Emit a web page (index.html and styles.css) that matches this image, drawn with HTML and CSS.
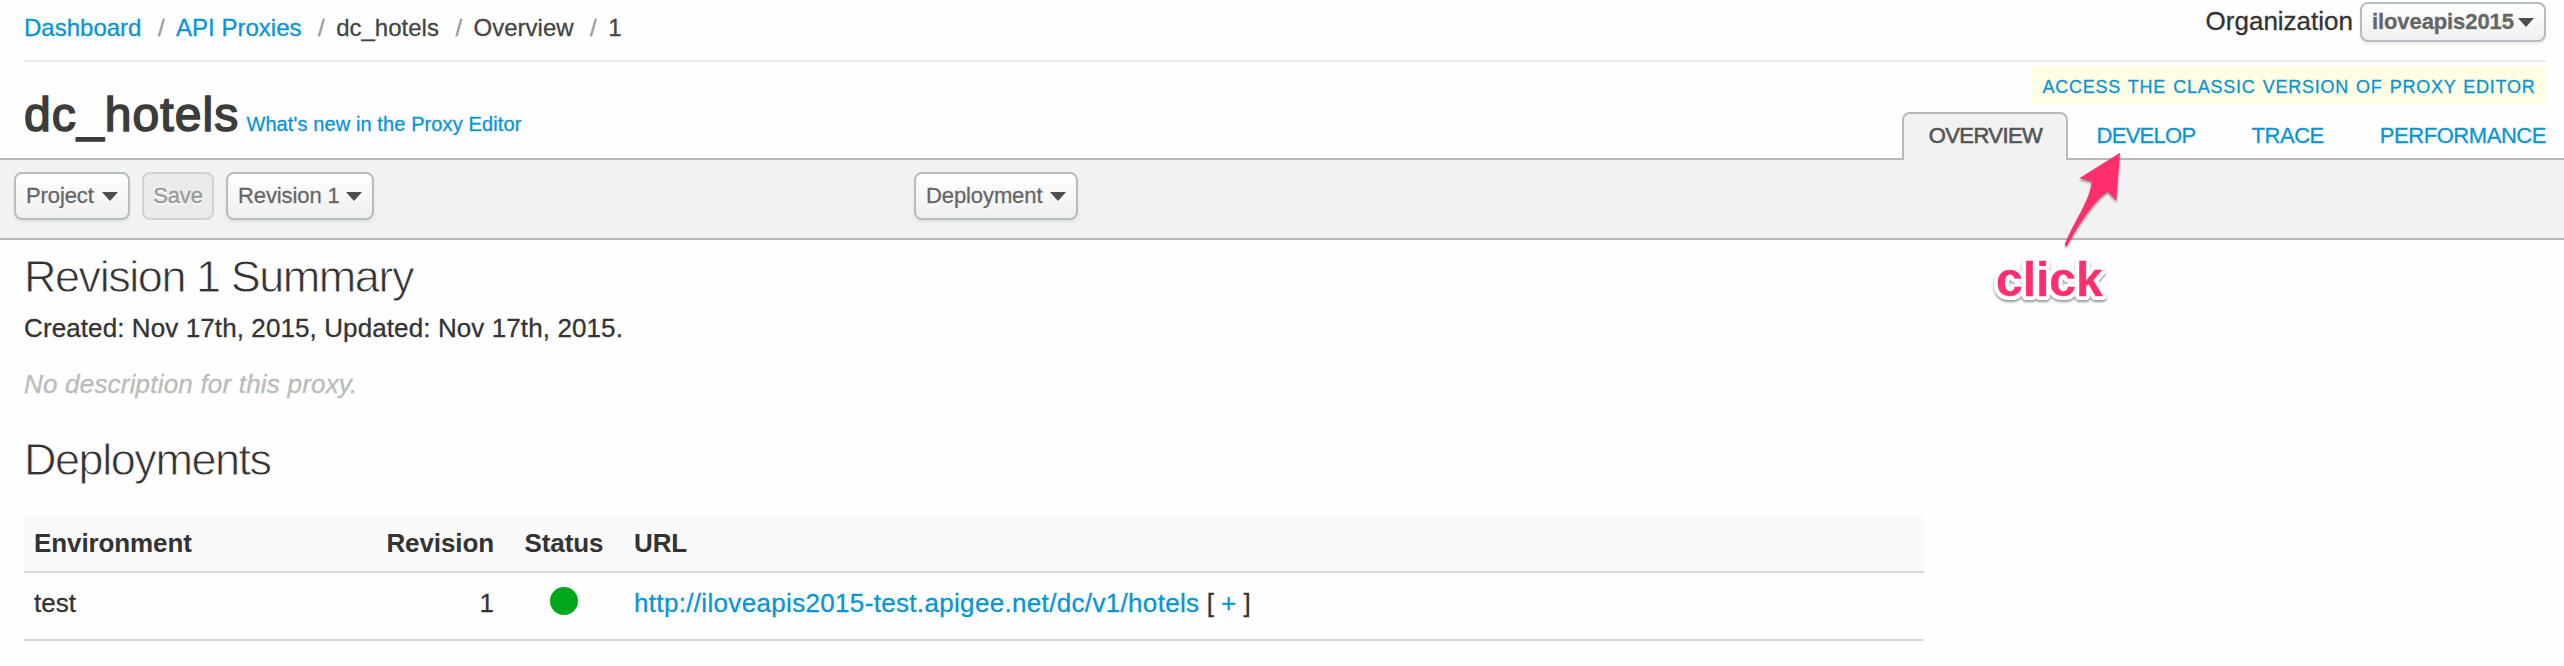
FILE: index.html
```html
<!DOCTYPE html>
<html lang="en">
<head>
<meta charset="utf-8">
<title>dc_hotels - Overview</title>
<link rel="stylesheet" href="styles.css">
</head>
<body>
<header class="topbar">
  <nav class="crumbs">
    <a href="#">Dashboard</a><i>/</i><a href="#">API Proxies</a><i>/</i><span>dc_hotels</span><i>/</i><span>Overview</span><i>/</i><span>1</span>
  </nav>
  <div class="org">
    <span class="org-label">Organization</span>
    <button class="btn btn-org">iloveapis2015<svg class="caret" viewBox="0 0 16 9"><path d="M0 0h16L8 9z"/></svg></button>
  </div>
</header>
<section class="titlebar">
  <div class="title">
    <h1>dc_hotels</h1>
    <a href="#">What's new in the Proxy Editor</a>
  </div>
  <div class="views">
    <a class="classic" href="#">ACCESS THE CLASSIC VERSION OF PROXY EDITOR</a>
    <nav class="tabs">
      <span class="tab active">OVERVIEW</span>
      <a class="tab develop" href="#">DEVELOP</a>
      <a class="tab trace" href="#">TRACE</a>
      <a class="tab performance" href="#">PERFORMANCE</a>
    </nav>
  </div>
</section>
<div class="toolbar">
  <div class="tools">
    <button class="btn btn-project">Project<svg class="caret" viewBox="0 0 16 9"><path d="M0 0h16L8 9z"/></svg></button>
    <button class="btn btn-save" disabled>Save</button>
    <button class="btn btn-revision">Revision 1<svg class="caret" viewBox="0 0 16 9"><path d="M0 0h16L8 9z"/></svg></button>
  </div>
  <button class="btn btn-deployment">Deployment<svg class="caret" viewBox="0 0 16 9"><path d="M0 0h16L8 9z"/></svg></button>
</div>
<main class="content">
  <h2>Revision 1 Summary</h2>
  <p class="dates">Created: Nov 17th, 2015, Updated: Nov 17th, 2015.</p>
  <p class="description">No description for this proxy.</p>
  <h2 class="deployments">Deployments</h2>
  <table class="grid">
    <colgroup><col class="c-env"><col class="c-rev"><col class="c-status"><col></colgroup>
    <thead>
      <tr><th>Environment</th><th class="num">Revision</th><th class="mid">Status</th><th>URL</th></tr>
    </thead>
    <tbody>
      <tr><td>test</td><td class="num">1</td><td class="mid"><span class="dot"></span></td><td><a class="url" href="#">http://iloveapis2015-test.apigee.net/dc/v1/hotels</a> [ <a href="#">+</a> ]</td></tr>
    </tbody>
  </table>
</main>
<div class="callout">
  <svg class="arrow" viewBox="0 0 70 106"><path d="M62 5.700L21.300 31.300L33.700 34.500C33 52 15 76 7 97C6.500 99 8.500 99.800 9.500 98C19 80 37 52 50 44.700L58.300 53.700Z"/></svg>
  <span class="callout-text">click</span>
</div>
</body>
</html>
```

FILE: styles.css
```css
* { box-sizing: border-box; }
body {
  margin: 0;
  background: #fefefe;
  color: #333;
  font: 26px/40px "Liberation Sans", Arial, sans-serif;
  -webkit-text-stroke: .3px currentColor;
}
a { color: #0895d5; text-decoration: none; }
h1, h2, p { margin: 0; }

.topbar {
  display: flex;
  justify-content: space-between;
  height: 62px;
  margin: 0 18px 0 24px;
  border-bottom: 2px solid #e8e8e8;
}
.crumbs {
  padding-top: 13px;
  font-size: 24px;
  line-height: 29px;
  color: #444;
  white-space: nowrap;
}
.crumbs i { margin: 0 11.500px 0 16.500px; font-style: normal; color: #999; }
.org { display: flex; gap: 7px; padding-top: 2px; height: 42px; }
.org-label { line-height: 39px; }

.btn {
  display: flex;
  align-items: center;
  justify-content: space-between;
  height: 48px;
  padding: 0 10px;
  border: 2px solid #b3bdc2;
  border-radius: 8px;
  background: linear-gradient(#fff, #efefef);
  box-shadow: 0 2px 3px rgba(0, 0, 0, .07);
  color: #666;
  font: 22px/44px "Liberation Sans", Arial, sans-serif;
  letter-spacing: -.1px;
  text-shadow: 0 2px 1px #fff;
  white-space: nowrap;
}
.caret { width: 16px; height: 9px; fill: #4d4d4d; flex: none; }
.btn-org { width: 186px; height: 40px; font-weight: bold; line-height: 36px; }
.btn-project { width: 116px; }
.btn-save {
  width: 72px;
  background: #ebebeb;
  border-color: #cdd3d6;
  color: #999;
  box-shadow: none;
  justify-content: center;
}
.btn-revision { width: 148px; }

.titlebar {
  display: flex;
  justify-content: space-between;
  height: 96px;
  padding: 0 18px 0 24px;
}
.title { display: flex; align-items: baseline; gap: 7px; padding-top: 29px; }
.title h1 {
  font-size: 48px;
  line-height: 48px;
  font-weight: normal;
  letter-spacing: 1.1px;
  color: #3c3c3c;
  -webkit-text-stroke: 1.6px #3c3c3c;
}
.title a { font-size: 20px; letter-spacing: .11px; }
.views { display: flex; flex-direction: column; align-items: flex-end; padding-top: 4px; }
.classic {
  width: 514px;
  height: 38px;
  margin-bottom: 8px;
  background: #fffde4;
  font-size: 18px;
  line-height: 43px;
  letter-spacing: .75px;
  word-spacing: 1.4px;
  text-align: center;
  white-space: nowrap;
}
.tabs { display: flex; font-size: 22px; letter-spacing: -.45px; }
.tab { height: 48px; line-height: 47px; }
.active {
  position: relative;
  width: 166px;
  border: 2px solid #b8b8b8;
  border-bottom: 0;
  border-radius: 8px 8px 0 0;
  background: #f2f2f2;
  color: #555;
  line-height: 43px;
  text-align: center;
  letter-spacing: -.6px;
  -webkit-text-stroke: .6px #555;
}
.develop { margin-left: 28px; letter-spacing: -.7px; }
.trace, .performance { margin-left: 56px; }

.toolbar {
  display: grid;
  grid-template-columns: 900px auto;
  justify-content: start;
  height: 82px;
  padding: 12px 14px;
  background: #f2f2f2;
  border: solid #b8b8b8;
  border-width: 2px 0;
}
.tools { display: flex; gap: 12px; }
.btn-deployment { width: 164px; }

.content { padding: 11px 0 0 24px; }
h2 {
  font-size: 45px;
  line-height: 52px;
  font-weight: normal;
  letter-spacing: -1.45px;
  color: #333;
  -webkit-text-stroke: .8px #fefefe;
}
.dates { padding-top: 5px; letter-spacing: .1px; }
.description { padding-top: 16px; font-style: italic; letter-spacing: .2px; color: #bbb; }
.deployments { margin-top: 30px; }

.grid {
  width: 1900px;
  margin-top: 29px;
  table-layout: fixed;
  border-spacing: 0;
  border-collapse: separate;
}
.c-env { width: 340px; }
.c-rev { width: 140px; }
.c-status { width: 120px; }
th, td { padding: 0 10px; border-bottom: 2px solid #d9d9d9; text-align: left; white-space: nowrap; }
th { height: 58px; background: #fafafa; letter-spacing: -.1px; -webkit-text-stroke: 0; }
td { height: 68px; line-height: 60px; padding-bottom: 6px; }
.num { text-align: right; }
.mid { text-align: center; padding: 0; }
.dot {
  display: block;
  width: 28px;
  height: 28px;
  margin: 0 auto 10px;
  border-radius: 50%;
  background: #00a71b;
}
.url { letter-spacing: .33px; }

/* Annotation lying over the page */
.callout { position: absolute; left: 1996px; top: 147px; filter: drop-shadow(0 2px 1px rgba(0, 0, 0, .4)); }
.arrow { display: block; width: 70px; height: 106px; margin-left: 62px; fill: #ff2e6d; }
.callout-text {
  display: block;
  margin-top: 3px;
  font-size: 48px;
  line-height: 48px;
  font-weight: bold;
  color: #ff2e6d;
  text-shadow: 4px 0 #fff, -4px 0 #fff, 0 4px #fff, 0 -4px #fff,
    3px 3px #fff, -3px 3px #fff, 3px -3px #fff, -3px -3px #fff,
    2px 4px #fff, -2px 4px #fff, 4px 2px #fff, -4px 2px #fff;
}
```
